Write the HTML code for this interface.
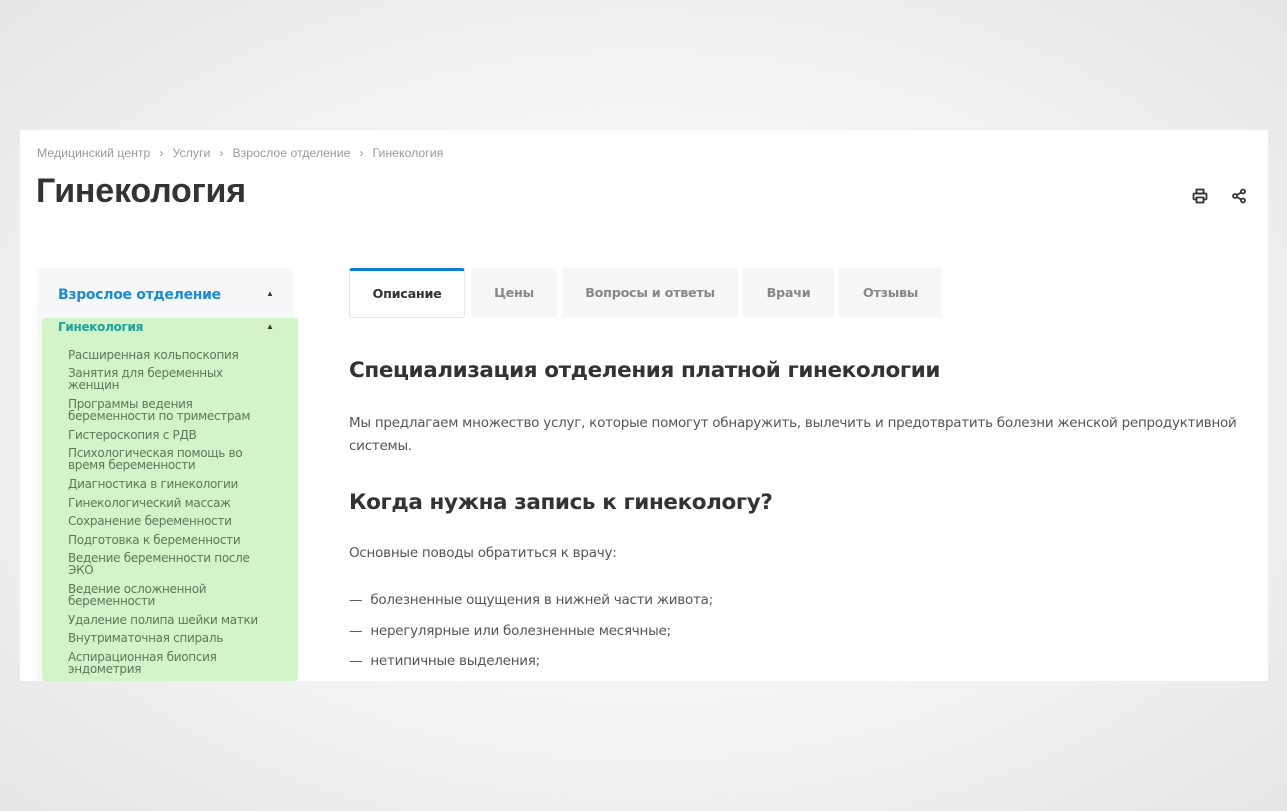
<!DOCTYPE html>
<html><head><meta charset="utf-8"><style>
*{margin:0;padding:0;box-sizing:border-box}
body{width:1287px;height:811px;overflow:hidden;background:radial-gradient(ellipse at center,#fdfdfd 0%,#f2f2f2 60%,#e6e6e6 100%);font-family:"Liberation Sans","DejaVu Sans",sans-serif;position:relative}
.p{position:absolute;left:20px;top:130px;width:1248px;height:551px;background:#fff;overflow:hidden}
.a{position:absolute;white-space:nowrap}
.bc{top:16px;left:17px;font-size:12.3px;color:#9a9a9a}
.bc span{margin:0 9px}
h1{position:absolute;left:16px;top:42px;font-size:34px;font-weight:bold;color:#333;letter-spacing:-0.2px}
.sb{position:absolute;left:17px;top:138px;width:257px;height:420px;background:#f7f8f9;border-radius:3px}
.gr{position:absolute;left:22px;top:188px;width:256px;height:363px;background:#d3f4c8;border-radius:3px}
.it{position:absolute;left:48px;font-size:12px;line-height:12px;color:#5a7a58;font-family:"DejaVu Sans",sans-serif;letter-spacing:-0.3px}
.tab{position:absolute;top:138px;height:50px;background:#f6f7f9;border-radius:3px;font-size:12.8px;font-weight:bold;color:#888;display:flex;align-items:center;justify-content:center;font-family:"DejaVu Sans",sans-serif;letter-spacing:-0.3px}
.h2{font-size:21.5px;font-weight:bold;color:#333;font-family:"DejaVu Sans",sans-serif;letter-spacing:-0.4px}
.tx{font-size:13.5px;color:#555;font-family:"DejaVu Sans",sans-serif;letter-spacing:-0.25px}
</style></head><body>
<div class="p">
<div class="a bc">Медицинский центр<span>›</span>Услуги<span>›</span>Взрослое отделение<span>›</span>Гинекология</div>
<h1>Гинекология</h1>
<svg style="position:absolute;left:1172px;top:58px" width="16" height="16" viewBox="0 0 16 16" fill="none" stroke="#333" stroke-width="1.8"><rect x="4.5" y="1.5" width="7" height="4"/><rect x="1.5" y="5.5" width="13" height="6" rx="1"/><rect x="4.5" y="9.5" width="7" height="5" fill="#fff"/></svg>
<svg style="position:absolute;left:1211px;top:58px" width="16" height="16" viewBox="0 0 16 16" fill="none" stroke="#333" stroke-width="1.8"><circle cx="12" cy="3.5" r="2"/><circle cx="4" cy="8" r="2"/><circle cx="12" cy="12.5" r="2"/><path d="M5.8 7 10.2 4.5M5.8 9 10.2 11.5"/></svg>
<div class="sb"></div>
<div class="a" style="left:38px;top:157px;font-size:14px;font-weight:bold;color:#1a8ad6;font-family:'DejaVu Sans',sans-serif;letter-spacing:-0.3px">Взрослое отделение</div>
<div class="a" style="left:246px;top:159px;font-size:8px;color:#333">▲</div>
<div class="gr"></div>
<div class="a" style="left:38px;top:190px;font-size:12px;font-weight:bold;color:#1ba39c;font-family:'DejaVu Sans',sans-serif;letter-spacing:-0.3px">Гинекология</div>
<div class="a" style="left:246px;top:192px;font-size:8px;color:#333">▲</div>
<div class="it" style="top:219px">Расширенная кольпоскопия</div>
<div class="it" style="top:237px">Занятия для беременных<br>женщин</div>
<div class="it" style="top:268px">Программы ведения<br>беременности по триместрам</div>
<div class="it" style="top:299px">Гистероскопия с РДВ</div>
<div class="it" style="top:317px">Психологическая помощь во<br>время беременности</div>
<div class="it" style="top:348px">Диагностика в гинекологии</div>
<div class="it" style="top:367px">Гинекологический массаж</div>
<div class="it" style="top:385px">Сохранение беременности</div>
<div class="it" style="top:404px">Подготовка к беременности</div>
<div class="it" style="top:422px">Ведение беременности после<br>ЭКО</div>
<div class="it" style="top:453px">Ведение осложненной<br>беременности</div>
<div class="it" style="top:484px">Удаление полипа шейки матки</div>
<div class="it" style="top:502px">Внутриматочная спираль</div>
<div class="it" style="top:521px">Аспирационная биопсия<br>эндометрия</div>
<div class="tab" style="left:329px;width:116px;background:#fff;border:1px solid #e8e8e8;border-top:3px solid #0a7fcc;color:#333">Описание</div>
<div class="tab" style="left:451px;width:86px">Цены</div>
<div class="tab" style="left:542px;width:176px">Вопросы и ответы</div>
<div class="tab" style="left:723px;width:91px">Врачи</div>
<div class="tab" style="left:819px;width:103px">Отзывы</div>
<div class="a h2" style="left:329px;top:228px">Специализация отделения платной гинекологии</div>
<div class="a tx" style="left:329px;top:282px;line-height:23px">Мы предлагаем множество услуг, которые помогут обнаружить, вылечить и предотвратить болезни женской репродуктивной<br>системы.</div>
<div class="a h2" style="left:329px;top:360px">Когда нужна запись к гинекологу?</div>
<div class="a tx" style="left:329px;top:415px">Основные поводы обратиться к врачу:</div>
<div class="a tx" style="left:329px;top:462px">—&nbsp; болезненные ощущения в нижней части живота;</div>
<div class="a tx" style="left:329px;top:493px">—&nbsp; нерегулярные или болезненные месячные;</div>
<div class="a tx" style="left:329px;top:523px">—&nbsp; нетипичные выделения;</div>
</div>
</body></html>
